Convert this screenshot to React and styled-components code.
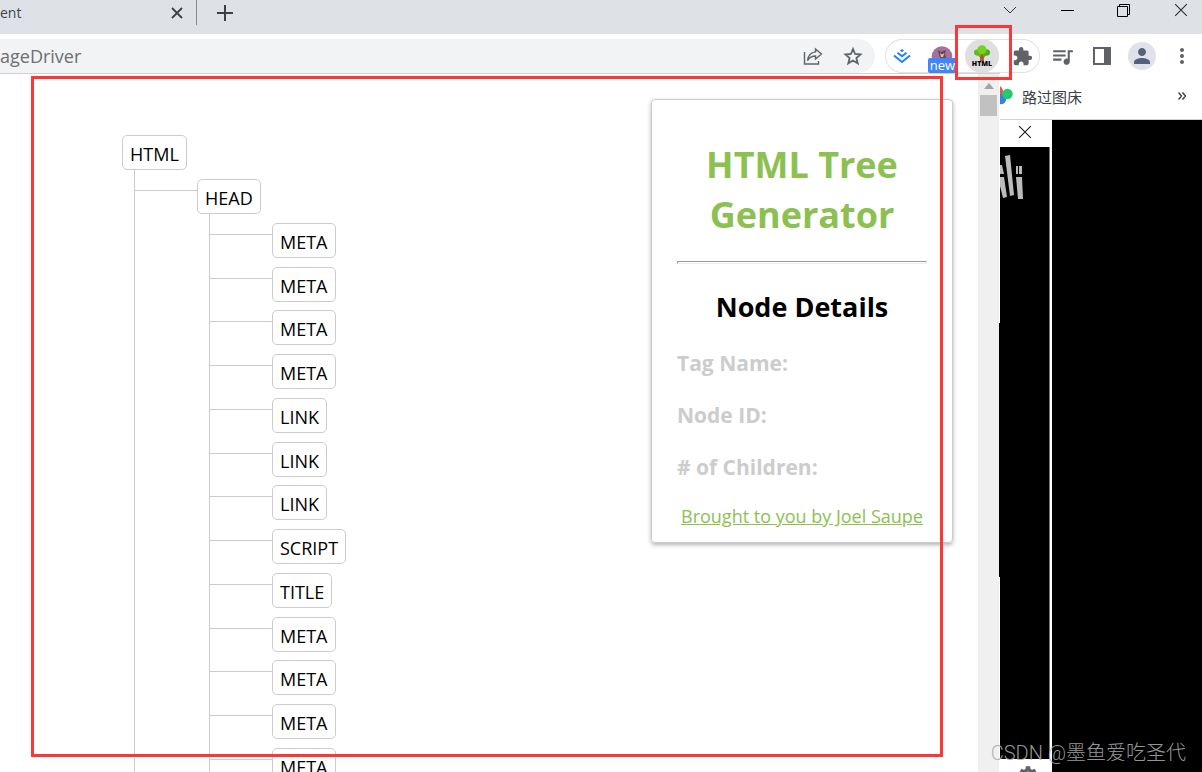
import React from "react";
import styled, { createGlobalStyle } from "styled-components";
import { MdExtension, MdMoreVert, MdPerson, MdQueueMusic, MdSettings } from "react-icons/md";

const GlobalStyle = createGlobalStyle`
  * {
    box-sizing: border-box;
  }

  body {
    margin: 0;
    background: #fff;
    font-family: "Open Sans", "Noto Sans", "Noto Sans CJK SC", sans-serif;
  }

  button {
    padding: 0;
    border: 0;
    background: none;
    font: inherit;
  }
`;

const Browser = styled.div`
  position: relative;
  display: flex;
  flex-direction: column;
  height: 100vh;
  overflow: hidden;
`;

const TabStrip = styled.header`
  display: flex;
  justify-content: space-between;
  height: 34px;
  background: #dee1e6;
`;

const TabGroup = styled.div`
  display: flex;
  align-items: center;
  height: 25px;
`;

const Tab = styled.div`
  display: flex;
  align-items: center;
  justify-content: space-between;
  width: 197px;
  height: 25px;
  padding-right: 12px;
  border-right: 1px solid #85888d;
  color: #3f4650;
  font-size: 14px;
`;

const IconButton = styled.button`
  display: flex;
  align-items: center;
  justify-content: center;
  flex: none;
  width: ${(props) => props.$width || 40}px;
  height: ${(props) => props.$height || 34}px;
  color: #5f6368;
`;

const TabClose = styled(IconButton)`
  width: 14px;
  height: 24px;
`;

const WindowControls = styled.div`
  display: flex;
  gap: 15px;
`;

const Toolbar = styled.nav`
  display: flex;
  flex: none;
  height: 39px;
  padding-top: 5px;
  background: #fff;
`;

const AddressBar = styled.div`
  display: flex;
  flex: 1;
  min-width: 0;
  margin-right: 10px;
  padding-right: 2px;
  border-radius: 0 17px 17px 0;
  background: #f1f3f4;
`;

const AddressInput = styled.input`
  flex: 1;
  min-width: 0;
  padding: 0;
  border: 0;
  outline: 0;
  background: transparent;
  color: #6c6f73;
  font-family: inherit;
  font-size: 18px;
`;

const Extensions = styled.div`
  display: flex;
  gap: 6px;
  width: 155px;
  height: 34px;
  margin-right: 2px;
  border-radius: 17px;
  box-shadow: inset 0 0 0 1px #dfe1e4;
`;

const ExtensionButton = styled(IconButton)`
  position: relative;
  width: 34px;
  border-radius: 50%;
  background: ${(props) => (props.$active ? "#dfdfdf" : "transparent")};
`;

const NewBadge = styled.span`
  position: absolute;
  left: 3px;
  bottom: 0;
  width: 29px;
  height: 15px;
  border-radius: 2px;
  background: #4285f4;
  color: #fff;
  font-size: 13px;
  line-height: 15px;
`;

const Profile = styled.span`
  display: flex;
  align-items: center;
  justify-content: center;
  width: 28px;
  height: 28px;
  border-radius: 50%;
  background: #dfe2e8;
  color: #54617a;
`;

const Body = styled.div`
  display: flex;
  flex: 1;
  min-height: 0;
`;

const Popup = styled.main`
  display: flex;
  flex: 1;
  min-width: 0;
  border-top: 1px solid #cfd1d4;
  background: #fff;
`;

const PopupContent = styled.div`
  display: flex;
  flex: 1;
  align-items: flex-start;
  justify-content: space-between;
  min-width: 0;
  padding: 0 25px 0 122px;
  overflow: hidden;
`;

const ScrollTrack = styled.div`
  display: flex;
  flex-direction: column;
  align-items: center;
  gap: 6px;
  width: 21px;
  padding-top: 9px;
  background: #f0f0f0;
`;

const ScrollThumb = styled.div`
  width: 17px;
  height: 21px;
  background: #c1c1c1;
`;

const PopupEdge = styled.div`
  width: 1px;
  background: linear-gradient(#fff 249px, #000 249px, #000 503px, #fff 503px);
`;

const Tree = styled.div`
  padding-top: 61px;
`;

const Node = styled.button`
  && {
    display: block;
    height: 35px;
    padding: 2px 7px 0 7px;
    border: 1px solid #ccc;
    border-radius: 5px;
    background: #fff;
    color: #000;
    font-size: 18px;
    line-height: 30px;
  }
`;

const Branch = styled.ul`
  margin: 0 0 0 12px;
  padding: 9px 0 0 0;
  border-left: 1px solid #ccc;
  list-style: none;
`;

const BranchItem = styled.li`
  display: flex;
  align-items: flex-start;
  margin-bottom: 9px;

  &::before {
    content: "";
    width: 62px;
    height: 1px;
    margin-top: 11px;
    background: #ccc;
  }

  &:nth-child(4n + 2) {
    margin-bottom: 8px;
  }
`;

const DetailsCard = styled.aside`
  flex: none;
  width: 302px;
  margin-top: 25px;
  padding: 40px 25px 14px 25px;
  border: 1px solid #ccc;
  border-radius: 4px;
  box-shadow: 0 2px 4px rgba(0, 0, 0, 0.3);
`;

const Title = styled.h1`
  margin: 0;
  color: #8cc152;
  font-size: 36px;
  line-height: 50px;
  text-align: center;
`;

const Divider = styled.hr`
  height: 3px;
  margin: 21px 0 23px 0;
  border: 1px solid #eee;
  border-top-color: #999;
  border-left-color: #999;
`;

const Subtitle = styled.h2`
  margin: 0 0 10px 0;
  font-size: 27px;
  line-height: 40px;
  text-align: center;
`;

const Detail = styled.h3`
  margin: 0;
  color: #ccc;
  font-size: 21px;
  line-height: 52px;
`;

const Credit = styled.a`
  display: block;
  margin-top: 11px;
  color: #8cc152;
  font-size: 18px;
  line-height: 24px;
  text-align: center;
  white-space: nowrap;
`;

const Side = styled.div`
  display: flex;
  flex-direction: column;
  flex: none;
  width: 202px;
`;

const Bookmarks = styled.nav`
  display: flex;
  align-items: center;
  height: 47px;
  border-bottom: 1px solid #d0d2d5;
  background: #fff;
`;

const Bookmark = styled.a`
  display: flex;
  flex: 1;
  align-items: center;
  gap: 9px;
  color: #3c4043;
  font-family: "Noto Sans CJK SC", sans-serif;
  font-size: 15px;
  text-decoration: none;
`;

const Desktop = styled.div`
  display: flex;
  flex: 1;
  min-height: 0;
  background: #000;
`;

const Panel = styled.div`
  display: flex;
  flex-direction: column;
  width: 52px;
  border-right: 2px solid #fff;
  background: #fff;
`;

const PanelClose = styled(IconButton)`
  && {
    width: 50px;
    height: 27px;
    padding-bottom: 4px;
  }
`;

const PanelScreen = styled.div`
  flex: 1;
  min-height: 0;
  padding-top: 8px;
  border-right: 1px solid #777;
  background: #000;
`;

const PanelFooter = styled.div`
  display: flex;
  justify-content: center;
  height: 13px;
  padding: 5px 0 0 6px;
  overflow: hidden;
  color: #5f6368;

  svg {
    flex: none;
  }
`;

const Highlight = styled.div`
  position: absolute;
  top: ${(props) => props.$top}px;
  left: ${(props) => props.$left}px;
  width: ${(props) => props.$width}px;
  height: ${(props) => props.$height}px;
  border: 3px solid #fb3838;
  pointer-events: none;
`;

const Watermark = styled.div`
  position: absolute;
  right: 16px;
  bottom: 4px;
  color: rgba(170, 170, 170, 0.9);
  font-family: Roboto, "Noto Sans CJK SC", sans-serif;
  font-size: 20px;
  font-weight: 300;
  line-height: 30px;
  white-space: nowrap;
`;

const headTags = [
  "META", "META", "META", "META", "LINK", "LINK", "LINK",
  "SCRIPT", "TITLE", "META", "META", "META", "META",
];

const Cross = ({ size, width = 1, color = "#333" }) => (
  <svg width={size} height={size} viewBox="0 0 12 12" stroke={color} strokeWidth={width} fill="none">
    <path d="M1 1l10 10M11 1L1 11" />
  </svg>
);

const ShareIcon = () => (
  <svg width="20" height="20" viewBox="0 0 20 20" fill="none" stroke="#5f6368" strokeWidth="1.4">
    <path d="M1.500 6v12h14v-3" />
    <path d="M12.500 3l6 5-6 5v-3C9 10 6.500 11.500 4.500 14.500c.6-4.500 3.300-8 8-8.600z" />
  </svg>
);

const StarIcon = () => (
  <svg width="20" height="20" viewBox="0 0 20 20" fill="none" stroke="#5f6368" strokeWidth="1.8">
    <path d="M10 3l2.100 5 5.400.5-4.100 3.500 1.300 5.300L10 14.500l-4.700 2.800L6.600 12 2.500 8.500 7.900 8z" />
  </svg>
);

const JuejinIcon = () => (
  <svg width="18" height="16" viewBox="0 0 18 16" fill="none" stroke="#1e80ff" strokeWidth="2">
    <path d="M9 1l2 1.600-2 1.600-2-1.600z" fill="#1e80ff" stroke="none" />
    <path d="M4.500 4.800L9 8.300l4.500-3.500M1 7.500L9 14l8-6.500" />
  </svg>
);

const MoleIcon = () => (
  <svg width="22" height="20" viewBox="0 0 22 20">
    <circle cx="11" cy="10.500" r="10.300" fill="#a4719c" />
    <path d="M7 4l3 2 2-1 3-1-1 4 1 4H9l-1-3z" fill="#6b4650" />
    <path d="M9 7l2 1.500L13.500 7 12 11h-2z" fill="#dcc0ac" />
  </svg>
);

const TreeIcon = () => (
  <svg width="20" height="22" viewBox="0 0 20 22">
    <path d="M8.500 8h3l.5 8H8z" fill="#a95d20" />
    <path d="M6 9l3 4M14 9l-3 4" stroke="#a95d20" strokeWidth="1.200" />
    <ellipse cx="6" cy="7.500" rx="4" ry="3.300" fill="#5fbe14" />
    <ellipse cx="14" cy="7.500" rx="4" ry="3.300" fill="#4faf10" />
    <circle cx="10" cy="4.800" r="4.500" fill="#74d321" />
    <text x="10" y="20.500" textAnchor="middle" fontFamily="Open Sans" fontSize="7" fontWeight="800">HTML</text>
  </svg>
);

const SidePanelIcon = () => (
  <svg width="18" height="18" viewBox="0 0 18 18">
    <path d="M1 1h16v16H1z" fill="none" stroke="#5f6368" strokeWidth="2" />
    <path d="M11 1h6v16h-6z" fill="#5f6368" />
  </svg>
);

const BookmarkIcon = () => (
  <svg width="13" height="20" viewBox="0 0 13 20">
    <path d="M0 0q4 3 3 9H0z" fill="#ef5350" />
    <circle cx="1" cy="13" r="5.200" fill="#3d7fe0" />
    <circle cx="7.500" cy="8" r="5.200" fill="#1fcb6b" />
  </svg>
);

const StreamLogo = () => (
  <svg width="26" height="50" viewBox="0 0 26 50" fill="#bcbcbc">
    <path d="M0 10h2l2 9H0zM0 22h4l3 20-4 1-3-12z" />
    <path d="M5 1l5-1 4 40-4 1z" />
    <path d="M16 11h2v8h-2zM19 11h3v8h-3zM16 22h6l1 22h-5z" />
  </svg>
);

const TagTree = () => (
  <Tree>
    <Node>HTML</Node>
    <Branch>
      <BranchItem>
        <div>
          <Node>HEAD</Node>
          <Branch>
            {headTags.map((tag, i) => (
              <BranchItem key={i}>
                <Node>{tag}</Node>
              </BranchItem>
            ))}
          </Branch>
        </div>
      </BranchItem>
    </Branch>
  </Tree>
);

const Details = () => (
  <DetailsCard>
    <Title>HTML Tree Generator</Title>
    <Divider />
    <Subtitle>Node Details</Subtitle>
    <Detail>Tag Name:</Detail>
    <Detail>Node ID:</Detail>
    <Detail># of Children:</Detail>
    <Credit href="#">Brought to you by Joel Saupe</Credit>
  </DetailsCard>
);

const App = () => (
  <Browser>
    <GlobalStyle />
    <TabStrip>
      <TabGroup>
        <Tab>
          <span>ent</span>
          <TabClose $width={14} aria-label="Close tab"><Cross size={12} width={1.8} color="#3c4043" /></TabClose>
        </Tab>
        <IconButton $width={56} $height={24} aria-label="New tab">
          <svg width="16" height="16" viewBox="0 0 16 16" stroke="#3c4043" strokeWidth="2">
            <path d="M8 0v16M0 8h16" />
          </svg>
        </IconButton>
      </TabGroup>
      <WindowControls>
        <IconButton $width={42} $height={20} aria-label="Search tabs">
          <svg width="14" height="8" viewBox="0 0 14 8" fill="none" stroke="#333"><path d="M1 1l6 6 6-6" /></svg>
        </IconButton>
        <IconButton $width={42} $height={20} aria-label="Minimize">
          <svg width="13" height="3" viewBox="0 0 13 3"><path d="M0 1h13v1H0z" /></svg>
        </IconButton>
        <IconButton $width={42} $height={20} aria-label="Restore">
          <svg width="14" height="14" viewBox="0 0 14 14" fill="none" stroke="#000">
            <path d="M.5 3.500h10v10H.5zM2.500 3.500v-2h10v10h-2" />
          </svg>
        </IconButton>
        <IconButton $width={42} $height={20} aria-label="Close window"><Cross size={14} /></IconButton>
      </WindowControls>
    </TabStrip>

    <Toolbar>
      <AddressBar>
        <AddressInput aria-label="Address" defaultValue="ageDriver" />
        <IconButton aria-label="Share"><ShareIcon /></IconButton>
        <IconButton aria-label="Bookmark this page"><StarIcon /></IconButton>
      </AddressBar>
      <Extensions>
        <ExtensionButton aria-label="Juejin"><JuejinIcon /></ExtensionButton>
        <ExtensionButton aria-label="Mole"><MoleIcon /><NewBadge>new</NewBadge></ExtensionButton>
        <ExtensionButton $active aria-label="HTML Tree Generator"><TreeIcon /></ExtensionButton>
        <ExtensionButton aria-label="Extensions"><MdExtension size={21} /></ExtensionButton>
      </Extensions>
      <IconButton aria-label="Media"><MdQueueMusic size={25} /></IconButton>
      <IconButton aria-label="Side panel"><SidePanelIcon /></IconButton>
      <IconButton aria-label="Profile"><Profile><MdPerson size={24} /></Profile></IconButton>
      <IconButton aria-label="Menu"><MdMoreVert size={24} /></IconButton>
    </Toolbar>

    <Body>
      <Popup>
        <PopupContent>
          <TagTree />
          <Details />
        </PopupContent>
        <ScrollTrack>
          <svg width="10" height="6" viewBox="0 0 10 6"><path d="M0 6l5-6 5 6z" fill="#a3a3a3" /></svg>
          <ScrollThumb />
        </ScrollTrack>
        <PopupEdge />
      </Popup>
      <Side>
        <Bookmarks>
          <Bookmark href="#"><BookmarkIcon />路过图床</Bookmark>
          <IconButton aria-label="More bookmarks">
            <svg width="8" height="8" viewBox="0 0 8 8" fill="none" stroke="#3c4043" strokeWidth="1.400">
              <path d="M.5.5L3.500 4l-3 3.500M4.500.5l3 3.500-3 3.500" />
            </svg>
          </IconButton>
        </Bookmarks>
        <Desktop>
          <Panel>
            <PanelClose aria-label="Close panel"><Cross size={14} color="#222" /></PanelClose>
            <PanelScreen><StreamLogo /></PanelScreen>
            <PanelFooter><MdSettings size={22} /></PanelFooter>
          </Panel>
        </Desktop>
      </Side>
    </Body>

    <Highlight $top={76} $left={31} $width={912} $height={681} />
    <Highlight $top={25} $left={955} $width={57} $height={55} />
    <Watermark>CSDN @墨鱼爱吃圣代</Watermark>
  </Browser>
);

export default App;
